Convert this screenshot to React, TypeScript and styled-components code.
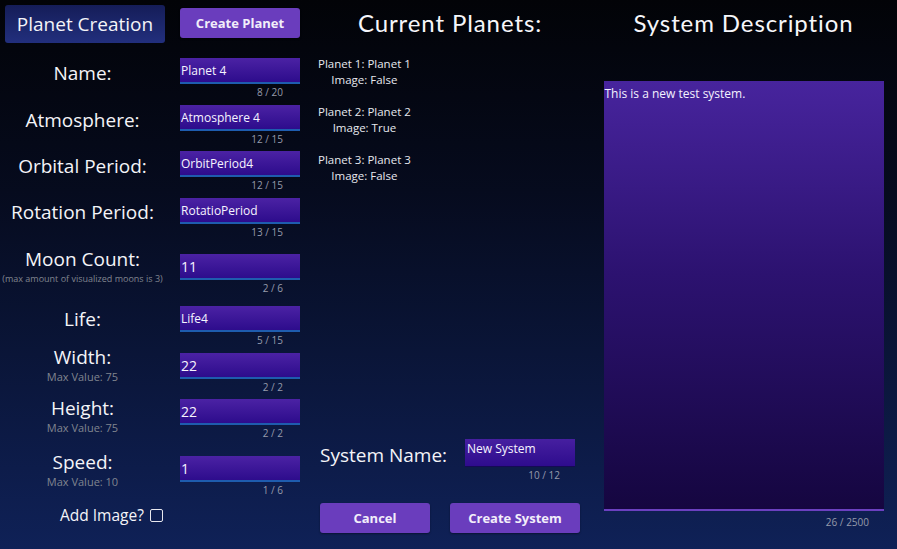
import { ReactElement } from 'react';
import styled, { createGlobalStyle } from 'styled-components';

const GlobalStyle = createGlobalStyle`
  html, body {
    margin: 0;
    padding: 0;
    height: 100%;
  }
  body {
    background: linear-gradient(180deg, #020307 0%, #060b1e 35%, #0f2157 100%);
    color: #f2f2f6;
    font-family: 'Open Sans', 'Noto Sans', sans-serif;
  }
  #root {
    height: 549px;
  }
`;

const Page = styled.div`
  display: flex;
  width: 897px;
  height: 549px;
  overflow: hidden;
`;

const LeftColumn = styled.section`
  width: 310px;
  display: flex;
  flex-direction: column;
`;

const Header = styled.div`
  display: flex;
  align-items: flex-start;
  padding: 5px 0 0 5px;
  gap: 15px;
`;

const TitleBox = styled.div`
  width: 160px;
  height: 38px;
  border-radius: 3px;
  background: linear-gradient(180deg, #151d58 0%, #222f7d 100%);
  display: flex;
  align-items: center;
  justify-content: center;
  font-size: 19px;
  color: #f4f4f8;
`;

const Button = styled.button<{ $width: number }>`
  width: ${(p) => p.$width}px;
  height: 30px;
  border: none;
  border-radius: 3px;
  background: #6a3dbd;
  color: #f2eefa;
  font-family: 'Open Sans', 'Noto Sans', sans-serif;
  font-weight: 700;
  font-size: 13px;
  box-shadow: 0 1px 2px rgba(0, 0, 0, 0.4);
  cursor: pointer;
`;

const HeaderButton = styled(Button)`
  margin-top: 3px;
`;

const Fields = styled.div`
  display: flex;
  flex-direction: column;
  padding-top: 15px;
`;

const Row = styled.div<{ $gap: number }>`
  display: flex;
  align-items: flex-start;
  margin-top: ${(p) => p.$gap}px;
`;

const LabelCell = styled.div<{ $shift: number }>`
  width: 165px;
  margin-top: ${(p) => p.$shift}px;
  display: flex;
  flex-direction: column;
  align-items: center;
`;

const Label = styled.span`
  font-size: 19px;
  line-height: 26px;
  color: #f4f4f8;
`;

const SubLabel = styled.span<{ $small?: boolean }>`
  font-size: ${(p) => (p.$small ? 9 : 11)}px;
  line-height: 13px;
  color: #80858f;
  white-space: nowrap;
`;

const FieldCell = styled.div<{ $width: number; $indent?: number }>`
  width: ${(p) => p.$width}px;
  margin-left: ${(p) => p.$indent ?? 15}px;
  display: flex;
  flex-direction: column;
`;

const Input = styled.input<{ $numeric?: boolean }>`
  box-sizing: border-box;
  width: 100%;
  height: 26px;
  margin: 0;
  padding: 0 1px;
  border: none;
  border-bottom: 2px solid #1e5cae;
  background: linear-gradient(180deg, #4b22a4 0%, #2d0c8c 100%);
  color: #f6f4ff;
  font-family: 'Open Sans', 'Noto Sans', sans-serif;
  font-size: ${(p) => (p.$numeric ? 14 : 12)}px;
  outline: none;
`;

const Counter = styled.span<{ $pad?: number }>`
  align-self: flex-end;
  padding-right: ${(p) => p.$pad ?? 17}px;
  height: 16px;
  line-height: 16px;
  font-size: 10px;
  color: #969bab;
`;

const CheckRow = styled.label`
  display: flex;
  align-items: center;
  gap: 6px;
  margin-top: 4px;
  padding-left: 60px;
  font-size: 15.5px;
  line-height: 26px;
  color: #f4f4f8;
`;

const CheckBox = styled.span`
  width: 11px;
  height: 11px;
  border: 1.5px solid #e8e8ee;
  border-radius: 2px;
`;

const MiddleColumn = styled.section`
  width: 280px;
  display: flex;
  flex-direction: column;
  padding-bottom: 16px;
`;

const RightColumn = styled.section`
  width: 307px;
  display: flex;
  flex-direction: column;
  align-items: center;
`;

const Heading = styled.h2`
  margin: 8px 0 0;
  font-family: Lato, 'Open Sans', sans-serif;
  font-weight: 400;
  font-size: 24px;
  line-height: 30px;
  letter-spacing: 0.9px;
  text-align: center;
  color: #f6f6fa;
`;

const PlanetList = styled.ul`
  list-style: none;
  margin: 18px 0 0;
  padding: 0 0 0 8px;
  display: flex;
  flex-direction: column;
  align-items: flex-start;
  gap: 16px;
`;

const PlanetItem = styled.li`
  display: flex;
  flex-direction: column;
  align-items: center;
  font-size: 11.5px;
  line-height: 16px;
  color: #e6e8ee;
`;

const Spacer = styled.div`
  flex: 1;
`;

const SystemRow = styled.div`
  display: flex;
  align-items: flex-start;
  padding-left: 10px;
`;

const SystemLabel = styled.span`
  width: 145px;
  margin-top: 2px;
  font-size: 19px;
  line-height: 28px;
  color: #f4f4f8;
`;

const SystemInput = styled.input`
  box-sizing: border-box;
  width: 110px;
  height: 28px;
  margin: 0;
  padding: 0 2px 8px;
  border: none;
  border-bottom: 1px solid #150a55;
  background: linear-gradient(180deg, #461fa0 0%, #2e0c8d 100%);
  color: #f6f4ff;
  font-family: 'Open Sans', 'Noto Sans', sans-serif;
  font-size: 12px;
  outline: none;
`;

const Actions = styled.div`
  display: flex;
  gap: 20px;
  margin-top: 20px;
  padding-left: 10px;
`;

const DescriptionBox = styled.div`
  box-sizing: border-box;
  width: 280px;
  height: 430px;
  margin-top: 43px;
  padding: 6px 1px;
  background: linear-gradient(180deg, #47249d 0%, #2c1270 45%, #150640 100%);
  border-bottom: 2px solid #6b40c0;
  font-size: 12px;
  line-height: 14px;
  color: #f4f2ff;
`;

const DescriptionCounter = styled.span`
  align-self: flex-end;
  padding: 4px 28px 0 0;
  font-size: 10px;
  line-height: 14px;
  color: #969bab;
`;

interface Field {
  label: string;
  sub?: string;
  small?: boolean;
  value: string;
  max: number;
  numeric?: boolean;
  gap: number;
  shift: number;
}

const fields: Field[] = [
  { label: 'Name:', value: 'Planet 4', max: 20, gap: 0, shift: 2 },
  { label: 'Atmosphere:', value: 'Atmosphere 4', max: 15, gap: 5, shift: 2 },
  { label: 'Orbital Period:', value: 'OrbitPeriod4', max: 15, gap: 4, shift: 2 },
  { label: 'Rotation Period:', value: 'RotatioPeriod', max: 15, gap: 5, shift: 1 },
  {
    label: 'Moon Count:',
    sub: '(max amount of visualized moons is 3)',
    small: true,
    value: '11',
    max: 6,
    numeric: true,
    gap: 14,
    shift: -8,
  },
  { label: 'Life:', value: 'Life4', max: 15, gap: 10, shift: 0 },
  { label: 'Width:', sub: 'Max Value: 75', value: '22', max: 2, numeric: true, gap: 5, shift: -9 },
  { label: 'Height:', sub: 'Max Value: 75', value: '22', max: 2, numeric: true, gap: 4, shift: -4 },
  { label: 'Speed:', sub: 'Max Value: 10', value: '1', max: 6, numeric: true, gap: 15, shift: -7 },
];

const planets = [
  { name: 'Planet 1', image: false },
  { name: 'Planet 2', image: true },
  { name: 'Planet 3', image: false },
];

const description = 'This is a new test system.';

const App = (): ReactElement => (
  <>
    <GlobalStyle />
    <Page>
      <LeftColumn>
        <Header>
          <TitleBox>Planet Creation</TitleBox>
          <HeaderButton $width={120}>Create Planet</HeaderButton>
        </Header>
        <Fields>
          {fields.map((f) => (
            <Row key={f.label} $gap={f.gap}>
              <LabelCell $shift={f.shift}>
                <Label>{f.label}</Label>
                {f.sub && <SubLabel $small={f.small}>{f.sub}</SubLabel>}
              </LabelCell>
              <FieldCell $width={120}>
                <Input defaultValue={f.value} $numeric={f.numeric} />
                <Counter>
                  {f.value.length} / {f.max}
                </Counter>
              </FieldCell>
            </Row>
          ))}
          <CheckRow>
            Add Image? <CheckBox />
          </CheckRow>
        </Fields>
      </LeftColumn>

      <MiddleColumn>
        <Heading>Current Planets:</Heading>
        <PlanetList>
          {planets.map((p, i) => (
            <PlanetItem key={p.name}>
              <span>
                Planet {i + 1}: {p.name}
              </span>
              <span>Image: {p.image ? 'True' : 'False'}</span>
            </PlanetItem>
          ))}
        </PlanetList>
        <Spacer />
        <SystemRow>
          <SystemLabel>System Name:</SystemLabel>
          <FieldCell $width={110} $indent={0}>
            <SystemInput defaultValue="New System" />
            <Counter $pad={15}>10 / 12</Counter>
          </FieldCell>
        </SystemRow>
        <Actions>
          <Button $width={110}>Cancel</Button>
          <Button $width={130}>Create System</Button>
        </Actions>
      </MiddleColumn>

      <RightColumn>
        <Heading>System Description</Heading>
        <DescriptionBox>{description}</DescriptionBox>
        <DescriptionCounter>{description.length} / 2500</DescriptionCounter>
      </RightColumn>
    </Page>
  </>
);

export default App;
